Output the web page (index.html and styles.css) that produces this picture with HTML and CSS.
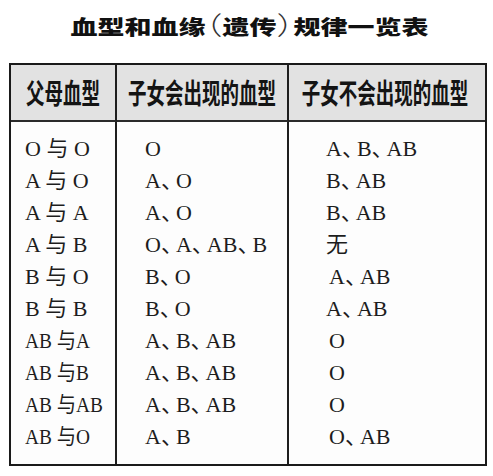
FILE: index.html
```html
<!DOCTYPE html>
<html lang="zh">
<head>
<meta charset="utf-8">
<title>血型和血缘（遗传）规律一览表</title>
<link rel="stylesheet" href="styles.css">
</head>
<body>
<div class="title"><span>血型和血缘<i class="p">（</i>遗传<i class="p">）</i>规律一览表</span></div>
<div class="tbl">
  <div class="hd c1"><span>父母血型</span></div>
  <div class="hd c2"><span>子女会出现的血型</span></div>
  <div class="hd c3"><span>子女不会出现的血型</span></div>

  <div class="bd c1">
    <div class="ln">O 与 O</div>
    <div class="ln">A 与 O</div>
    <div class="ln">A 与 A</div>
    <div class="ln">A 与 B</div>
    <div class="ln">B 与 O</div>
    <div class="ln">B 与 B</div>
    <div class="ln"><span class="nar">AB 与A</span></div>
    <div class="ln"><span class="nar">AB 与B</span></div>
    <div class="ln"><span class="nar">AB 与AB</span></div>
    <div class="ln"><span class="nar">AB 与O</span></div>
  </div>

  <div class="bd c2">
    <div class="ln">O</div>
    <div class="ln">A<span class="d">、</span>O</div>
    <div class="ln">A<span class="d">、</span>O</div>
    <div class="ln">O<span class="d">、</span>A<span class="d">、</span>AB<span class="d">、</span>B</div>
    <div class="ln">B<span class="d">、</span>O</div>
    <div class="ln">B<span class="d">、</span>O</div>
    <div class="ln">A<span class="d">、</span>B<span class="d">、</span>AB</div>
    <div class="ln">A<span class="d">、</span>B<span class="d">、</span>AB</div>
    <div class="ln">A<span class="d">、</span>B<span class="d">、</span>AB</div>
    <div class="ln">A<span class="d">、</span>B</div>
  </div>

  <div class="bd c3">
    <div class="ln">A<span class="d">、</span>B<span class="d">、</span>AB</div>
    <div class="ln">B<span class="d">、</span>AB</div>
    <div class="ln">B<span class="d">、</span>AB</div>
    <div class="ln">无</div>
    <div class="ln sh">A<span class="d">、</span>AB</div>
    <div class="ln">A<span class="d">、</span>AB</div>
    <div class="ln sh">O</div>
    <div class="ln sh">O</div>
    <div class="ln sh">O</div>
    <div class="ln sh">O<span class="d">、</span>AB</div>
  </div>
</div>
</body>
</html>
```

FILE: styles.css
```css
html, body {
  margin: 0;
  padding: 0;
  background: #ffffff;
}

body {
  width: 493px;
  height: 476px;
  overflow: hidden;
  color: #161616;
}

.title {
  height: 54px;
  padding-top: 9px;
  padding-left: 6px;
  display: flex;
  justify-content: center;
  font-family: "Noto Sans CJK SC", sans-serif;
  font-weight: 900;
  font-size: 27px;
  line-height: 30px;
  color: #111111;
  white-space: nowrap;
}

.title span {
  display: inline-block;
  transform: scaleY(0.74);
}

.title .p {
  font-style: normal;
  font-weight: 200;
  font-size: 34px;
  line-height: 0;
  font-feature-settings: "halt";
  color: #333333;
}

.tbl {
  margin-left: 9px;
  width: 474px;
  border: 2px solid #1a1a1a;
  display: grid;
  grid-template-columns: 106px 172px 196px;
  grid-template-rows: 57px 342px;
  background: #fdfdfd;
}

.c1, .c2 {
  border-right: 2px solid #1e1e1e;
}

.hd {
  background: #e2e2e2;
  border-bottom: 2px solid #2a2a2a;
  display: flex;
  align-items: center;
  justify-content: center;
  font-family: "Noto Sans CJK SC", sans-serif;
  font-weight: 700;
  font-size: 28px;
  line-height: 57px;
  white-space: nowrap;
  color: #141414;
  overflow: visible;
}

.hd span {
  display: inline-block;
  transform: scaleX(0.66);
  transform-origin: center;
}

.hd.c3 span {
  margin-left: -4px;
}

.bd {
  padding-top: 11px;
  font-family: "Liberation Serif", "Noto Sans CJK SC", serif;
  font-size: 22px;
  color: #1d1d1d;
}

.bd.c1 { padding-left: 14px; }
.bd.c2 { padding-left: 28px; }
.bd.c3 { padding-left: 37px; }

.ln {
  height: 32px;
  line-height: 32px;
  white-space: nowrap;
}

.ln.sh {
  padding-left: 3px;
}

.nar {
  display: inline-block;
  transform: scaleX(0.88);
  transform-origin: left center;
}

.d {
  letter-spacing: -7px;
}
```
